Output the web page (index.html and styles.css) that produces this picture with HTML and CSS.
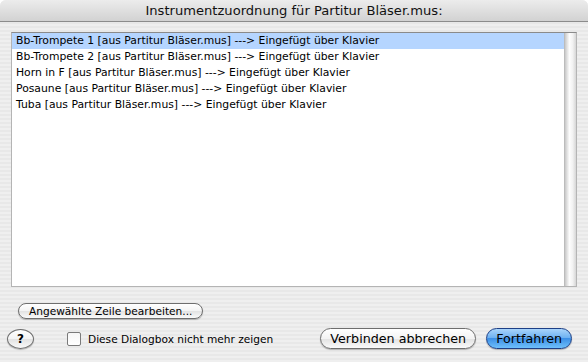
FILE: index.html
```html
<!DOCTYPE html>
<html lang="de">
<head>
    <meta charset="UTF-8">
    <title>Instrumentzuordnung</title>
    <link rel="stylesheet" href="styles.css">
</head>
<body>
    <div class="window">
        <div class="titlebar">Instrumentzuordnung für Partitur Bläser.mus:</div>

        <div class="content">
            <div class="list">
                <div class="rows">
                    <div class="row selected">Bb-Trompete 1 [aus Partitur Bläser.mus] ---&gt; Eingefügt über Klavier</div>
                    <div class="row">Bb-Trompete 2 [aus Partitur Bläser.mus] ---&gt; Eingefügt über Klavier</div>
                    <div class="row">Horn in F [aus Partitur Bläser.mus] ---&gt; Eingefügt über Klavier</div>
                    <div class="row">Posaune [aus Partitur Bläser.mus] ---&gt; Eingefügt über Klavier</div>
                    <div class="row">Tuba [aus Partitur Bläser.mus] ---&gt; Eingefügt über Klavier</div>
                </div>
                <div class="scrolltrack"></div>
            </div>

            <div class="edit-row">
                <button class="btn small">Angewählte Zeile bearbeiten...</button>
            </div>

            <div class="bottom-row">
                <button class="btn help">?</button>
                <label class="check">
                    <span class="box"></span>
                    Diese Dialogbox nicht mehr zeigen
                </label>
                <div class="spacer"></div>
                <button class="btn">Verbinden abbrechen</button>
                <button class="btn default">Fortfahren</button>
            </div>
        </div>
    </div>
</body>
</html>
```

FILE: styles.css
```css
html, body {
    margin: 0;
    padding: 0;
    background: #fff;
}
body {
    font-family: "DejaVu Sans", "Liberation Sans", sans-serif;
    color: #000;
}
.window {
    width: 588px;
    height: 362px;
    overflow: hidden;
    border-radius: 6px 6px 0 0;
    background: repeating-linear-gradient(to bottom, #efefef 0, #efefef 2px, #e8e8e8 2px, #e8e8e8 4px);
}
.titlebar {
    height: 21px;
    line-height: 22px;
    text-align: center;
    font-size: 13.1px;
    color: #111;
    background: linear-gradient(to bottom, #ececec, #d2d2d2);
    border-bottom: 1px solid #8c8c8c;
}
.content {
    padding: 10px 11px 0 11px;
}
.list {
    display: flex;
    height: 253px;
    background: #fff;
    border: 1px solid #b4b4b4;
    border-top-color: #8a8a8a;
}
.rows {
    flex: 1;
}
.row {
    height: 16px;
    line-height: 16px;
    padding-left: 4px;
    font-size: 10.8px;
    white-space: nowrap;
}
.row.selected {
    background: #b5d5ff;
}
.scrolltrack {
    width: 11px;
    background: linear-gradient(to right, #c8c8c8, #fdfdfd 40%, #f2f2f2 70%, #d6d6d6);
    border-left: 1px solid #bcbcbc;
}
.edit-row {
    padding: 13px 0 0 7px;
}
.bottom-row {
    display: flex;
    align-items: center;
    padding: 9px 5px 0 0;
    margin-left: -4px;
}
.spacer {
    flex: 1;
}
.btn {
    font-family: inherit;
    font-size: 12.7px;
    height: 21px;
    padding: 0 9px;
    border: 1px solid #6e6e6e;
    border-radius: 11px;
    background: linear-gradient(to bottom, #ffffff 0%, #f3f3f3 50%, #e2e2e2 51%, #fafafa 100%);
    box-shadow: 0 1px 1px rgba(0, 0, 0, 0.25);
    color: #000;
}
.btn.small {
    font-size: 10.6px;
    height: 16px;
    padding: 0 10px;
    border-radius: 8px;
}
.btn.help {
    width: 27px;
    height: 20px;
    padding: 0;
    font-weight: bold;
    font-size: 12px;
    border-radius: 50%;
}
.btn.default {
    margin-left: 10px;
    border-color: #1d3f86;
    background: linear-gradient(to bottom, #a9d4fb 0%, #6fb2f2 45%, #3d8fe6 50%, #6ec0fb 100%);
}
.check {
    display: flex;
    align-items: center;
    margin-left: 33px;
    font-size: 10.6px;
}
.box {
    width: 12px;
    height: 12px;
    margin-right: 7px;
    border: 1px solid #7a7a7a;
    border-radius: 2px;
    background: linear-gradient(to bottom, #f6f6f6, #ffffff);
}
```
